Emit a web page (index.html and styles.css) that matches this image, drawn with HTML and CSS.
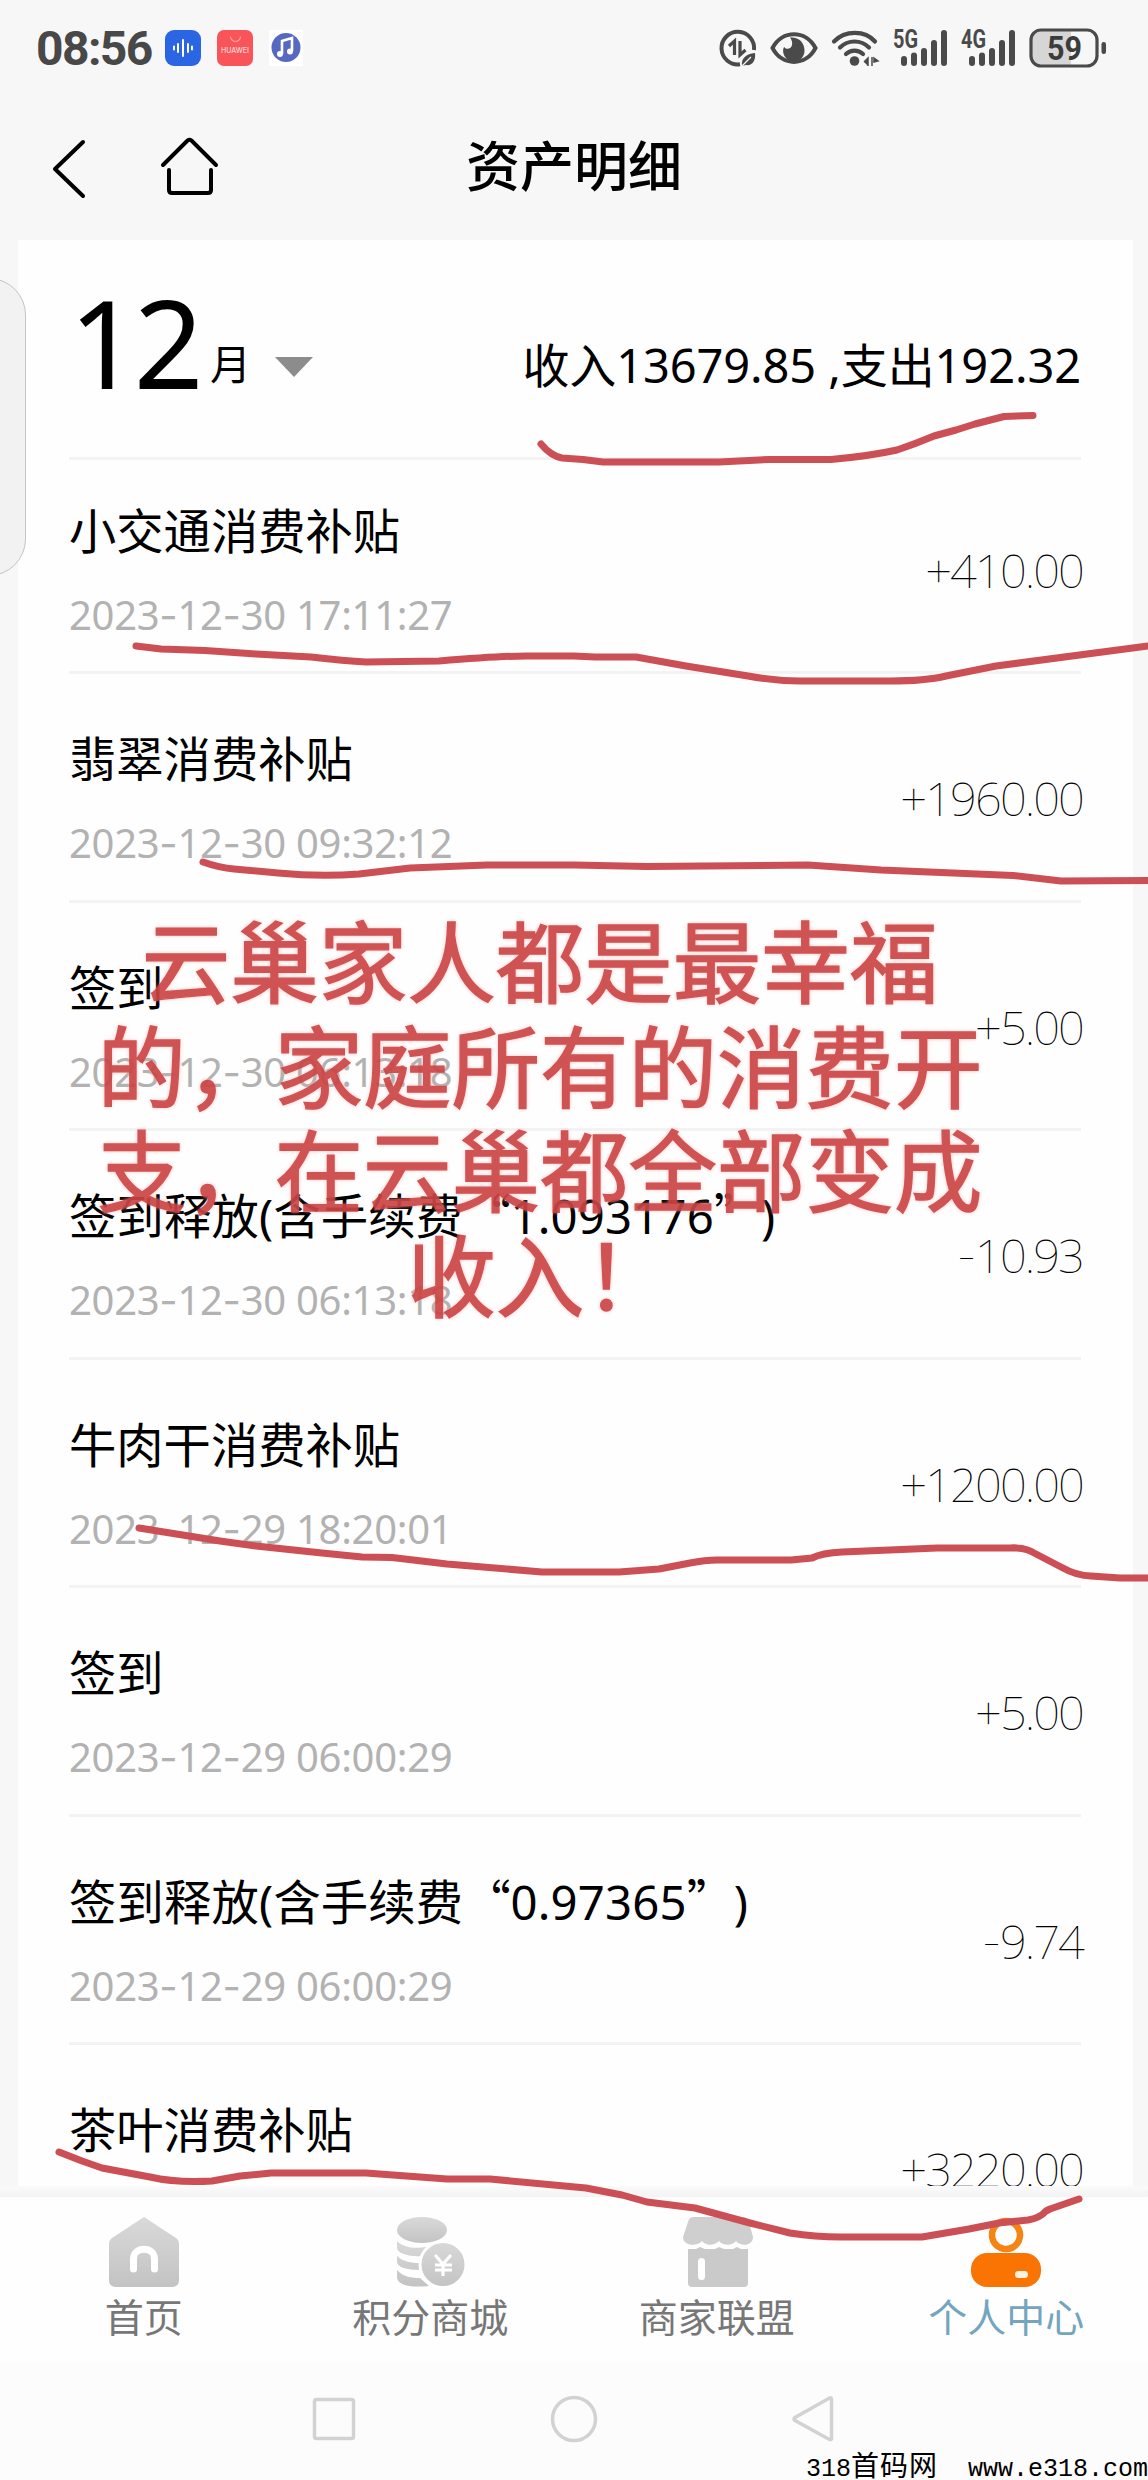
FILE: index.html
```html
<!DOCTYPE html>
<html lang="zh-CN">
<head>
<meta charset="utf-8">
<title>资产明细</title>
<link rel="stylesheet" href="styles.css">
</head>
<body>
<div class="screen">
  <div class="status">
    <div class="status-left">
      <span class="clock">08:56</span>
      <svg class="app" width="36" height="36" viewBox="0 0 36 36"><rect width="36" height="36" rx="9" fill="#2a66e4"/><path d="M9 16.500v3M13 14v8M18 10v16M23 14v8M27 16.500v3" stroke="#fff" stroke-width="2" stroke-linecap="round"/></svg>
      <svg class="app" width="36" height="36" viewBox="0 0 36 36"><rect width="36" height="36" rx="7" fill="#f9545a"/><path d="M13.500 6.500a5 5 0 0 0 10 0" fill="none" stroke="#ffa0a0" stroke-width="1.200"/><text x="18" y="23" text-anchor="middle" textLength="28" lengthAdjust="spacingAndGlyphs" class="brand">HUAWEI</text></svg>
      <svg class="app" width="34" height="36" viewBox="0 0 34 36"><rect width="34" height="36" fill="#fff"/><circle cx="17" cy="17.500" r="14.500" fill="#5668c2"/><path d="M13 24V11l10-3v13" fill="none" stroke="#fff" stroke-width="2.600"/><circle cx="11" cy="24" r="3" fill="#fff"/><circle cx="21" cy="21.500" r="3" fill="#fff"/></svg>
    </div>
    <div class="status-right">
      <svg width="38" height="38" viewBox="0 0 38 38"><path d="M21 35.300A16.300 16.300 0 1 1 35 21" fill="none" stroke="#4a4a4a" stroke-width="4"/><path d="M10 17l5.500-5v14M21 12v14l5.500-5" fill="none" stroke="#4a4a4a" stroke-width="3.200"/><path d="M23 37c-1-8 4-12 13-13 1 8-3 13-9 12" fill="#4a4a4a"/><path d="M23 37l9-9" stroke="#f7f7f7" stroke-width="1.200"/></svg>
      <svg class="eye" width="48" height="38" viewBox="0 0 48 38"><path d="M2.500 19C12 .5 36 .5 45.500 19 36 37.500 12 37.500 2.500 19z" fill="none" stroke="#4a4a4a" stroke-width="4"/><path d="M20 8.500c8-1 14.500 4.500 14.500 13a10.700 10.700 0 0 1-21.400.5c0-2 .4-3 1-4 4 5 12-1 5.900-9.500z" fill="#4a4a4a"/></svg>
      <svg class="wifi" width="48" height="38" viewBox="0 0 48 38"><g fill="none" stroke="#4a4a4a" stroke-width="4.200" stroke-linecap="round"><path d="M3 12.500C14 1 34 1 44 12.500M9 18.500c8-8 21-8 29 0M15 25c5-4.500 12-4.500 17 0"/></g><circle cx="23.500" cy="32" r="4.800" fill="#4a4a4a"/><path d="M33 33l4-4v8M41 28v9M43 29l4 3-4 1z" fill="#4a4a4a" stroke="#4a4a4a" stroke-width="1.500"/></svg>
      <svg class="sig5" width="56" height="38" viewBox="0 0 56 38"><text x="0" y="19" textLength="25" lengthAdjust="spacingAndGlyphs" class="net">5G</text><path d="M11 30v4M21 26.500v7.500M31 22v12M41 14v20M51 4v30" stroke="#4a4a4a" stroke-width="6" stroke-linecap="round"/></svg>
      <svg class="sig4" width="56" height="38" viewBox="0 0 56 38"><text x="0" y="19" textLength="25" lengthAdjust="spacingAndGlyphs" class="net">4G</text><path d="M11 30v4M21 26.500v7.500M31 22v12M41 14v20M51 4v30" stroke="#4a4a4a" stroke-width="6" stroke-linecap="round"/></svg>
      <svg class="battery" width="78" height="40" viewBox="0 0 78 40"><path d="M42 3H13A10 10 0 0 0 3 13v14a10 10 0 0 0 10 10h29z" fill="#d6d6d6"/><rect x="2" y="2" width="66" height="36" rx="10" fill="none" stroke="#4a4a4a" stroke-width="3.200"/><rect x="72.500" y="14" width="4.500" height="12" rx="2.200" fill="#4a4a4a"/><text x="18" y="32" textLength="35" lengthAdjust="spacingAndGlyphs" class="level">59</text></svg>
    </div>
  </div>

  <header class="nav">
    <svg class="back" width="36" height="60" viewBox="0 0 36 60"><path d="M31 4 3 31l28 27" fill="none" stroke="#000" stroke-width="4" stroke-linecap="round" stroke-linejoin="round"/></svg>
    <svg class="home" width="60" height="60" viewBox="0 0 60 60"><path d="M4 27 28.500 2.500q2-1.500 4 0L57 27M10 32v20q0 3 3 3h36q3 0 3-3V32" fill="none" stroke="#000" stroke-width="4" stroke-linecap="round"/></svg>
    <h1>资产明细</h1>
  </header>

  <main class="card">
    <section class="summary">
      <div class="month"><b>12</b><span>月</span><i></i></div>
      <div class="totals">收入13679.85 ,支出192.32</div>
    </section>
    <ul>
      <li><div><h2>小交通消费补贴</h2><time>2023<i>-</i>12<i>-</i>30 17:11:27</time></div><p>+410.00</p></li>
      <li><div><h2>翡翠消费补贴</h2><time>2023<i>-</i>12<i>-</i>30 09:32:12</time></div><p>+1960.00</p></li>
      <li><div><h2>签到</h2><time>2023<i>-</i>12<i>-</i>30 06:13:18</time></div><p>+5.00</p></li>
      <li><div><h2 class="fee">签到释放(含手续费<q class="open">“</q>1.093176<q>”</q>)</h2><time>2023<i>-</i>12<i>-</i>30 06:13:18</time></div><p><i>-</i>10.93</p></li>
      <li><div><h2>牛肉干消费补贴</h2><time>2023<i>-</i>12<i>-</i>29 18:20:01</time></div><p>+1200.00</p></li>
      <li><div><h2>签到</h2><time>2023<i>-</i>12<i>-</i>29 06:00:29</time></div><p>+5.00</p></li>
      <li><div><h2 class="fee">签到释放(含手续费<q class="open">“</q>0.97365<q>”</q>)</h2><time>2023<i>-</i>12<i>-</i>29 06:00:29</time></div><p><i>-</i>9.74</p></li>
      <li><div><h2>茶叶消费补贴</h2></div><p>+3220.00</p></li>
    </ul>
  </main>

  <div class="shade"></div>
  <nav class="tabs">
    <a><svg width="70" height="70" viewBox="0 0 70 70"><defs><linearGradient id="g" x1="0" y1="0" x2="0" y2="1"><stop offset="0" stop-color="#d9d9d9"/><stop offset="1" stop-color="#c3c3c3"/></linearGradient></defs><path d="M35 0 67 21q3 2 3 5v37q0 7-7 7H7q-7 0-7-7V26q0-3 3-5z" fill="url(#g)"/><path d="M24.500 52V42c0-13 21-13 21 0v10" fill="none" stroke="#fff" stroke-width="7" stroke-linecap="round"/></svg><span>首页</span></a>
    <a><svg width="70" height="70" viewBox="0 0 70 70"><g fill="url(#g)"><ellipse cx="27" cy="13" rx="25" ry="13"/><path d="M2 24c8 8 22 8 33 5l-8 10C17 40 2 37 2 31zM2 39c6 6 15 7 23 7v7C12 53 2 50 2 45zM2 53c6 7 15 8 23 8l9 8C15 71 2 68 2 60z"/><circle cx="48" cy="47.500" r="23" stroke="#fff" stroke-width="3"/></g><path d="m40 38 8 9 8-9M48 47v12M40 48h17M40 53h17" fill="none" stroke="#fff" stroke-width="3.200"/></svg><span>积分商城</span></a>
    <a><svg width="70" height="70" viewBox="-1 0 70 70"><path d="M5 5q1-5 6-5h48q6 0 7 5l4 15c0 9-12 10-17 4-4 5-13 5-17 0-5 5-13 5-17 0-5 6-19 5-19-4z" fill="#cfcfcf"/><path d="M5 32h8l4-2 5 2h10l4-2 5 2h9l4-2 4 2h7v34q0 4-4 4H9q-4 0-4-4z" fill="#cacaca"/><rect x="15" y="41" width="7" height="22" rx="3.500" fill="#fff"/></svg><span>商家联盟</span></a>
    <a class="on"><svg width="70" height="70" viewBox="0 0 70 70"><circle cx="35" cy="18" r="14" fill="none" stroke="#f58414" stroke-width="6.500"/><rect y="36" width="70" height="34" rx="16" fill="#fa7404"/><rect x="44" y="54" width="13" height="7" rx="3.500" fill="#fff0e0"/></svg><span>个人中心</span></a>
  </nav>

  <footer class="keys">
    <svg width="46" height="48" viewBox="0 0 46 48"><rect x="3.500" y="4.500" width="39" height="39" rx="2" /></svg>
    <svg width="48" height="48" viewBox="0 0 48 48"><circle cx="24" cy="24" r="21.500"/></svg>
    <svg width="48" height="48" viewBox="1 0 48 48"><path d="M41.500 4v40q-1 1-2 .5L5 25.500q-2-1.500 0-3L39.500 3q1.500-.5 2 1z"/></svg>
  </footer>

  <p class="caption">云巢家人都是最幸福<br>的，家庭所有的消费开<br>支，在云巢都全部变成<br>收入！</p>
  <svg class="strokes" width="1148" height="2480" viewBox="0 0 1148 2480">
    <path d="M541 444Q551 456 562 458L583 459.500 603 462H719L769 459.500H831Q870 456 897 450 915 444 934 436L956 430 975 424 1004 416.500 1033 415.500"/>
    <path d="M136 646L161 649 205 650.500 256 654 311 657Q345 661 366 662L439 661Q500 656 527 656H574L595 657H636L686 666 748 676Q775 681 800 681H890Q925 681 946 676L996 666 1148 646"/>
    <path d="M203 862Q220 868 234 869L278 873Q320 877 359 874L410 868 487 865H574L647 866.500 808 865 881 870 1013 875.500 1061 881 1152 880.500"/>
    <path d="M139 1528L220 1541 256 1546 322 1553 362 1557 392 1557.500 447 1564 542 1572H619L659 1569 690 1563Q705 1560 717 1560H791L812 1558Q822 1553 842 1552L937 1548H1010Q1026 1547 1036 1554L1061 1567Q1077 1576 1091 1576L1120 1578H1152"/>
    <path d="M59 2152L82 2161 102 2168 150 2177Q176 2183 212 2181L240 2176 271 2173H366L447 2179H490L586 2188 622 2195 647 2202 695 2208 750 2223 790 2233Q815 2237 841 2237H922L969 2229 999 2223 1028 2220Q1040 2218 1046 2211L1050 2209 1079 2199"/>
  </svg>
  <p class="source">318<span>首码网</span>&nbsp;&nbsp;www.e318.com</p>
</div>
</body>
</html>
```
FILE: styles.css
```css
* { box-sizing: border-box; margin: 0; padding: 0; }

body {
  width: 1148px;
  font-family: "Noto Sans", "Noto Sans CJK SC", sans-serif;
  color: #000;
}

svg { display: block; flex: none; overflow: visible; }

.screen {
  position: relative;
  width: 1148px;
  height: 2480px;
  overflow: hidden;
  background: #f7f7f7;
  display: flex;
  flex-direction: column;
}

.status {
  height: 96px;
  flex: none;
  padding: 0 41px 0 36px;
  display: flex;
  align-items: center;
  justify-content: space-between;
}
.status-left, .status-right { display: flex; align-items: center; }
.clock {
  width: 129px;
  font: 700 48px/60px Roboto, sans-serif;
  letter-spacing: -1.600px;
  color: #484848;
  margin-top: 2px;
}
.app { margin-right: 16px; }
.brand { font: 500 8px Inter, sans-serif; fill: #ffd5d5; }
.eye { margin-left: 13px; }
.wifi { margin-left: 13px; }
.sig5 { margin-left: 14px; }
.sig4 { margin-left: 12px; }
.battery { margin-left: 12px; }
.net { font: 700 25px Roboto, sans-serif; fill: #4a4a4a; }
.level { font: 700 34px Roboto, sans-serif; fill: #3c3c3c; }

.nav {
  height: 144px;
  flex: none;
  display: grid;
  grid-template: 1fr / 52px 107px 1fr 160px;
  align-items: center;
}
.back { grid-area: 1 / 2; }
.home { grid-area: 1 / 3; }
.nav h1 {
  grid-area: 1 / 1 / 2 / -1;
  text-align: center;
  font-size: 54px;
  font-weight: 500;
  line-height: 70px;
  padding-bottom: 4px;
}

.card {
  height: 1946px;
  flex: none;
  margin: 0 15px 0 18px;
  padding: 0 52px 0 51px;
  overflow: hidden;
  background: #fefefe;
}

.summary {
  height: 220px;
  display: flex;
  justify-content: space-between;
  align-items: flex-start;
  border-bottom: 3px solid #f3f3f3;
}
.month { display: flex; align-items: flex-end; padding: 42px 0 0; }
.month b { width: 141px; font-size: 122px; font-weight: 400; line-height: 120px; letter-spacing: -5px; }
.month span { font-size: 41px; line-height: 50px; margin-bottom: 13px; }
.month i {
  margin: 0 0 25px 24px;
  border: 19px solid transparent;
  border-top: 20px solid #8c8c8c;
  border-bottom: 0;
}
.totals { padding-top: 95px; font-size: 47px; line-height: 60px; letter-spacing: -.100px; white-space: nowrap; }

.card ul { list-style: none; }
.card li {
  height: 228.500px;
  padding: 55px 0 30px;
  display: flex;
  align-items: flex-start;
  justify-content: space-between;
  border-bottom: 3px solid #f3f3f3;
}
.card li:first-child { height: 214px; padding-top: 41px; }
.card h2 { font-size: 47.300px; font-weight: 400; line-height: 60px; white-space: nowrap; }
.card h2.fee { letter-spacing: .200px; }
.card q { display: inline-block; width: 47px; quotes: none; font-family: "Noto Sans CJK SC", sans-serif; line-height: 50px; }
.card q.open { text-align: right; }
.card q::before, .card q::after { content: none; }
.card time { display: block; margin-top: 29px; font-size: 40px; line-height: 50px; letter-spacing: -.300px; color: #b2b2b2; white-space: nowrap; }
.card li i { font-style: normal; font-family: Inter, sans-serif; }
.card li p { padding-top: 39px; margin-right: -2px; font-size: 47px; font-weight: 100; line-height: 60px; letter-spacing: -1.900px; white-space: nowrap; }

.shade { height: 11px; flex: none; background: linear-gradient(#fafafa, #f3f3f3); }

.tabs { height: 165px; flex: none; display: flex; padding-left: 2px; background: #fefefe; }
.tabs a {
  flex: 1;
  display: flex;
  flex-direction: column;
  align-items: center;
  padding-top: 20px;
  font-size: 39px;
  line-height: 50px;
  color: #777;
}
.tabs a + a { padding-left: 3px; }
.tabs span { margin-top: 5px; }
.tabs a.on { color: #74a5bf; padding-left: 6px; }

.keys {
  height: 118px;
  flex: none;
  display: flex;
  justify-content: center;
  gap: 193px;
  padding: 33px 0 0 2px;
  background: #fcfcfc;
}
.keys svg { fill: none; stroke: #d2d2d2; stroke-width: 3.500px; }

/* Edge panel handle on the left side */
.screen::before {
  content: "";
  position: absolute;
  left: -50px;
  top: 278px;
  width: 74px;
  height: 296px;
  border: 1px solid #c4c4c4;
  border-radius: 37px;
  background: #f2f2f2;
}

/* Annotations drawn over the list */
.caption {
  position: absolute;
  left: 0;
  top: 910px;
  width: 1080px;
  text-align: center;
  font-size: 88.500px;
  font-weight: 400;
  line-height: 104.600px;
  color: #cd4545;
  -webkit-text-stroke: 1.400px #cd4545;
  opacity: .92;
  text-shadow: 0 0 4px #ffa8a8;
}
.strokes {
  position: absolute;
  left: 0;
  top: 0;
  fill: none;
  stroke: #cb4f55;
  stroke-width: 7px;
  stroke-linecap: round;
  stroke-linejoin: round;
}
.source {
  position: absolute;
  right: 0;
  top: 2449px;
  font: 25px/34px "Liberation Mono", monospace;
  white-space: nowrap;
}
.source span { font: 28px/31px "Noto Sans CJK SC", sans-serif; letter-spacing: 1px; }
```
